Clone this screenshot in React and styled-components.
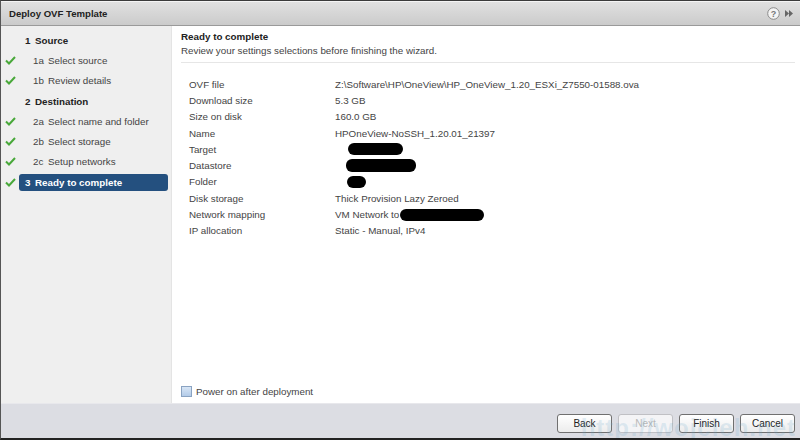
import React from 'react'
import styled, { createGlobalStyle } from 'styled-components'

const Global = createGlobalStyle`
  html, body { margin: 0; padding: 0; }
  body {
    font-family: "Liberation Sans", Arial, sans-serif;
    font-size: 9.8px;
    color: #333;
  }
`

const Dialog = styled.div`
  width: 800px;
  height: 440px;
  display: flex;
  flex-direction: column;
  box-sizing: border-box;
  border-top: 1px solid #3a3a3a;
  border-left: 1px solid #555;
  border-bottom: 2px solid #222;
  background: #fff;
  position: relative;
  overflow: hidden;
`

const TitleBar = styled.div`
  height: 23px;
  flex: none;
  display: flex;
  align-items: center;
  justify-content: space-between;
  padding: 0 6px 0 8px;
  background: linear-gradient(#e0e0e0, #cbcbcb);
  border-bottom: 1px solid #9a9a9a;
  border-top: 1px solid #f4f4f4;
`

const Title = styled.div`
  font-weight: bold;
  font-size: 9.6px;
  color: #222;
`

const TitleIcons = styled.div`
  display: flex;
  align-items: center;
  gap: 4px;
`

const Body = styled.div`
  flex: 1;
  display: flex;
  min-height: 0;
`

const Nav = styled.div`
  width: 171px;
  flex: none;
  background: #efefef;
  border-right: 1px solid #e4e4e4;
  padding-top: 4px;
  box-sizing: border-box;
`

const NavRow = styled.div`
  height: 20.3px;
  display: flex;
  align-items: center;
`

const Check = styled.div`
  width: 17px;
  flex: none;
  display: flex;
  justify-content: center;
  padding-left: 1px;
`

const NavLabel = styled.div`
  display: flex;
  align-items: center;
  height: 17px;
  box-sizing: border-box;
  font-weight: ${p => (p.$bold ? 'bold' : 'normal')};
  color: ${p => (p.$active ? '#fff' : p.$bold ? '#222' : '#444')};
  background: ${p => (p.$active ? '#24507f' : 'transparent')};
  border-radius: 3px;
  padding-left: ${p => (p.$sub ? '14px' : '6px')};
  width: 149px;
`

const Num = styled.span`
  width: ${p => (p.$sub ? '15px' : '10px')};
  display: inline-block;
`

const Content = styled.div`
  flex: 1;
  display: flex;
  flex-direction: column;
  padding: 5px 5px 0 7px;
`

const Heading = styled.div`
  font-weight: bold;
  color: #222;
  margin-left: 2px;
`

const Sub = styled.div`
  color: #444;
  margin: 3px 0 0 2px;
  padding-bottom: 6px;
  border-bottom: 1px solid #e6e6e6;
`

const Table = styled.div`
  display: grid;
  grid-template-columns: 146px 1fr;
  grid-auto-rows: 16.3px;
  align-items: center;
  margin: 13px 0 0 10px;
  color: #444;
`

const Value = styled.div`
  display: flex;
  align-items: center;
`

const Redact = styled.span`
  display: inline-block;
  background: #000;
  height: ${p => p.$h || 10}px;
  width: ${p => p.$w}px;
  border-radius: 6px;
  margin-left: ${p => p.$ml || 0}px;
`

const Spacer = styled.div`
  flex: 1;
`

const PowerRow = styled.label`
  display: flex;
  align-items: center;
  gap: 4px;
  color: #444;
  margin: 0 0 6px 2px;
`

const Box = styled.span`
  width: 9px;
  height: 9px;
  border: 1px solid #8aa3c2;
  background: linear-gradient(#d8e6f6, #b3cbe8);
`

const Footer = styled.div`
  height: 34px;
  flex: none;
  background: #dcdde3;
  display: flex;
  align-items: center;
  justify-content: flex-end;
  gap: 6px;
  padding: 0 5px 0 0;
  border-top: 1px solid #e8e8ec;
`

const Button = styled.button`
  width: 55px;
  height: 19px;
  font-family: "Liberation Sans", Arial, sans-serif;
  font-size: 10px;
  color: ${p => (p.disabled ? '#b8b8b8' : '#222')};
  background: ${p => (p.disabled ? '#f4f4f6' : 'linear-gradient(#ffffff, #ececec)')};
  border: 1px solid ${p => (p.disabled ? '#c0c0c4' : '#707070')};
  border-radius: 3px;
  padding: 0;
  margin-top: 5px;
`

const Watermark = styled.div`
  position: absolute;
  right: 4px;
  bottom: -4px;
  font-size: 24px;
  font-weight: bold;
  letter-spacing: 1px;
  color: rgba(110, 170, 205, 0.2);
  pointer-events: none;
`

const Tick = () => (
  <svg width="11" height="9" viewBox="0 0 11 9">
    <path d="M1 4.5 L4 7.5 L10 1" fill="none" stroke="#49a83a" strokeWidth="2" />
  </svg>
)

const nav = [
  { num: '1', label: 'Source', bold: true },
  { num: '1a', label: 'Select source', done: true, sub: true },
  { num: '1b', label: 'Review details', done: true, sub: true },
  { num: '2', label: 'Destination', bold: true },
  { num: '2a', label: 'Select name and folder', done: true, sub: true },
  { num: '2b', label: 'Select storage', done: true, sub: true },
  { num: '2c', label: 'Setup networks', done: true, sub: true },
  { num: '3', label: 'Ready to complete', done: true, bold: true, active: true },
]

const rows = [
  ['OVF file', 'Z:\\Software\\HP\\OneView\\HP_OneView_1.20_ESXi_Z7550-01588.ova'],
  ['Download size', '5.3 GB'],
  ['Size on disk', '160.0 GB'],
  ['Name', 'HPOneView-NoSSH_1.20.01_21397'],
  ['Target', <Redact $w={55} $h={12} $ml={13} />],
  ['Datastore', <Redact $w={70} $h={13} $ml={11} />],
  ['Folder', <Redact $w={19} $h={12} $ml={12} />],
  ['Disk storage', 'Thick Provision Lazy Zeroed'],
  ['Network mapping', <>VM Network to <Redact $w={84} $h={12} $ml={1} /></>],
  ['IP allocation', 'Static - Manual, IPv4'],
]

export default function App() {
  return (
    <Dialog>
      <Global />
      <TitleBar>
        <Title>Deploy OVF Template</Title>
        <TitleIcons>
          <svg width="13" height="13" viewBox="0 0 13 13">
            <circle cx="6.5" cy="6.5" r="5.8" fill="#f4f4f4" stroke="#8a8a8a" />
            <text x="6.5" y="10" textAnchor="middle" fontSize="9" fontWeight="bold" fill="#777" fontFamily="Liberation Sans">?</text>
          </svg>
          <svg width="10" height="9" viewBox="0 0 10 9">
            <path d="M1 1 L5 4.5 L1 8 Z M5 1 L9 4.5 L5 8 Z" fill="#666" />
          </svg>
        </TitleIcons>
      </TitleBar>
      <Body>
        <Nav>
          {nav.map(n => (
            <NavRow key={n.num}>
              <Check>{n.done && <Tick />}</Check>
              <NavLabel $bold={n.bold} $sub={n.sub} $active={n.active}>
                <Num $sub={n.sub}>{n.num}</Num>
                {n.label}
              </NavLabel>
            </NavRow>
          ))}
        </Nav>
        <Content>
          <Heading>Ready to complete</Heading>
          <Sub>Review your settings selections before finishing the wizard.</Sub>
          <Table>
            {rows.map(([k, v]) => (
              <React.Fragment key={k}>
                <div>{k}</div>
                <Value>{v}</Value>
              </React.Fragment>
            ))}
          </Table>
          <Spacer />
          <PowerRow>
            <Box />
            Power on after deployment
          </PowerRow>
        </Content>
      </Body>
      <Footer>
        <Button>Back</Button>
        <Button disabled>Next</Button>
        <Button>Finish</Button>
        <Button>Cancel</Button>
      </Footer>
      <Watermark>http://wojcieh.net</Watermark>
    </Dialog>
  )
}
